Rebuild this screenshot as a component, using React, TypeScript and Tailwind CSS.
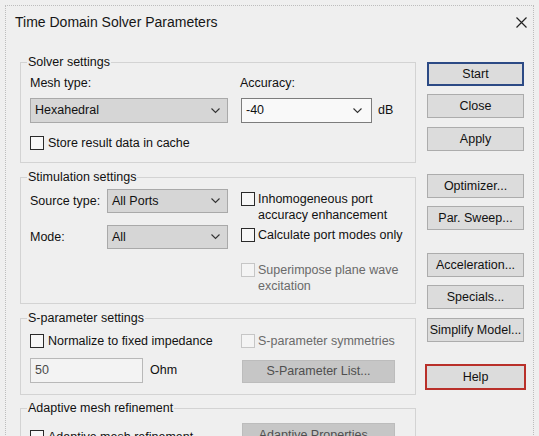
import { twMerge } from 'tailwind-merge'

function Chevron() {
	return (
		<svg width="9" height="6" viewBox="0 0 9 6" className="shrink-0">
			<polyline points="0.5,0.5 4.5,4.5 8.5,0.5" fill="none" stroke="#333" strokeWidth="1.1" />
		</svg>
	)
}

function Check({ disabled }: { disabled?: boolean }) {
	return (
		<span
			className={twMerge(
				'block w-[14px] h-[14px] border shrink-0 border-[#2a2a2a] bg-[#f7f7f7]',
				disabled && 'border-[#c6c6c6] bg-[#f4f4f4]'
			)}
		/>
	)
}

function Combo({ value, className }: { value: string; className?: string }) {
	return (
		<div
			className={twMerge(
				'h-[24px] border border-[#a9a9a9] bg-[#d6d6d6] flex items-center justify-between pl-[4px] pr-[7px]',
				className
			)}
		>
			<span>{value}</span>
			<Chevron />
		</div>
	)
}

function Btn({ label, className }: { label: string; className?: string }) {
	return (
		<div
			className={twMerge(
				'h-[24px] border border-[#acacac] bg-[#dcdcdc] flex items-center justify-center',
				className
			)}
		>
			{label}
		</div>
	)
}

function Group({ title, className, children }: { title: string; className?: string; children: React.ReactNode }) {
	return (
		<fieldset className={twMerge('border border-[#d3d3d3] px-[9px] min-w-0', className)}>
			<legend className="-ml-[3px] px-[1px] leading-[16px]">{title}</legend>
			{children}
		</fieldset>
	)
}

export default function App() {
	return (
		<div className="w-[539px] h-[436px] overflow-hidden bg-[#efefef] pl-[5px] pt-[5px] font-['Liberation_Sans',Arial,sans-serif] text-[12.5px] text-[#111]">
			<div className="w-[529px] h-[440px] border-t border-l border-r border-dotted border-[#bdbdbd]">
				<div className="h-[32px] flex items-center justify-between pl-[9px] pr-[6px]">
					<span className="text-[14px] text-[#161616]">Time Domain Solver Parameters</span>
					<svg width="11" height="11" viewBox="0 0 11 11">
						<path d="M0.5 0.5 L10.5 10.5 M10.5 0.5 L0.5 10.5" stroke="#222" strokeWidth="1.2" />
					</svg>
				</div>
				<div className="flex pl-[14px]">
					<div className="w-[396px] mt-[16px]">
						<Group title="Solver settings" className="pb-[11px]">
							<div className="mt-[5px] flex h-[16px] leading-[16px]">
								<span className="w-[210px]">Mesh type:</span>
								<span>Accuracy:</span>
							</div>
							<div className="mt-[7px] flex items-center">
								<Combo value="Hexahedral" className="w-[198px] h-[25px]" />
								<div className="ml-[13px] w-[131px] h-[25px] border border-[#7c7c7c] bg-[#f9f9f9] flex items-center justify-between pl-[4px] pr-[9px]">
									<span>-40</span>
									<Chevron />
								</div>
								<span className="ml-[6px]">dB</span>
							</div>
							<div className="mt-[12px] flex items-center gap-[4px] h-[16px]">
								<Check />
								<span>Store result data in cache</span>
							</div>
						</Group>

						<Group title="Stimulation settings" className="mt-[6px] pb-[9px]">
							<div className="flex">
								<div className="w-[211px] shrink-0">
									<div className="mt-[4px] h-[24px] flex items-center">
										<span className="w-[77px]">Source type:</span>
										<Combo value="All Ports" className="w-[121px]" />
									</div>
									<div className="mt-[12px] h-[24px] flex items-center">
										<span className="w-[77px]">Mode:</span>
										<Combo value="All" className="w-[121px]" />
									</div>
								</div>
								<div className="mt-[6px] leading-[16px]">
									<div className="flex items-start gap-[3px]">
										<span className="mt-[1px]">
											<Check />
										</span>
										<span>
											Inhomogeneous port
											<br />
											accuracy enhancement
										</span>
									</div>
									<div className="mt-[4px] flex items-start gap-[3px]">
										<span className="mt-[1px]">
											<Check />
										</span>
										<span>Calculate port modes only</span>
									</div>
									<div className="mt-[19px] flex items-start gap-[3px] text-[#6a6a6a]">
										<span className="mt-[1px]">
											<Check disabled />
										</span>
										<span>
											Superimpose plane wave
											<br />
											excitation
										</span>
									</div>
								</div>
							</div>
						</Group>

						<Group title="S-parameter settings" className="mt-[6px] pb-[11px]">
							<div className="mt-[7px] flex h-[16px] items-center">
								<div className="w-[211px] shrink-0 flex items-center gap-[4px]">
									<Check />
									<span>Normalize to fixed impedance</span>
								</div>
								<div className="flex items-center gap-[3px] text-[#6a6a6a]">
									<Check disabled />
									<span>S-parameter symmetries</span>
								</div>
							</div>
							<div className="mt-[9px] flex items-start">
								<div className="w-[211px] shrink-0 flex items-center">
									<div className="w-[113px] h-[25px] border border-[#b8b8b8] bg-[#f3f3f3] flex items-center pl-[4px] text-[#4a4a4a]">
										50
									</div>
									<span className="ml-[7px]">Ohm</span>
								</div>
								<Btn
									label="S-Parameter List..."
									className="ml-[1px] mt-[2px] w-[153px] h-[23px] bg-[#c6c6c6] border-[#bcbcbc] text-[#4f4f4f]"
								/>
							</div>
						</Group>

						<Group title="Adaptive mesh refinement" className="mt-[5px] pb-[11px]">
							<div className="mt-[7px] flex items-start">
								<div className="w-[211px] shrink-0 mt-[5px] flex items-center gap-[4px]">
									<Check />
									<span>Adaptive mesh refinement</span>
								</div>
								<Btn
									label="Adaptive Properties..."
									className="ml-[1px] w-[153px] bg-[#c6c6c6] border-[#bcbcbc] text-[#4f4f4f]"
								/>
							</div>
						</Group>
					</div>

					<div className="w-[97px] ml-[11px] mt-[24px] flex flex-col">
						<Btn label="Start" className="border-2 border-[#2c4a85]" />
						<Btn label="Close" className="mt-[8px]" />
						<Btn label="Apply" className="mt-[9px]" />
						<Btn label="Optimizer..." className="mt-[23px]" />
						<Btn label="Par. Sweep..." className="mt-[8px]" />
						<Btn label="Acceleration..." className="mt-[23px]" />
						<Btn label="Specials..." className="mt-[8px]" />
						<Btn label="Simplify Model..." className="mt-[9px]" />
						<Btn label="Help" className="mt-[22px] -mx-[2px] h-[26px] border-2 border-[#b9302a]" />
					</div>
				</div>
			</div>
		</div>
	)
}
